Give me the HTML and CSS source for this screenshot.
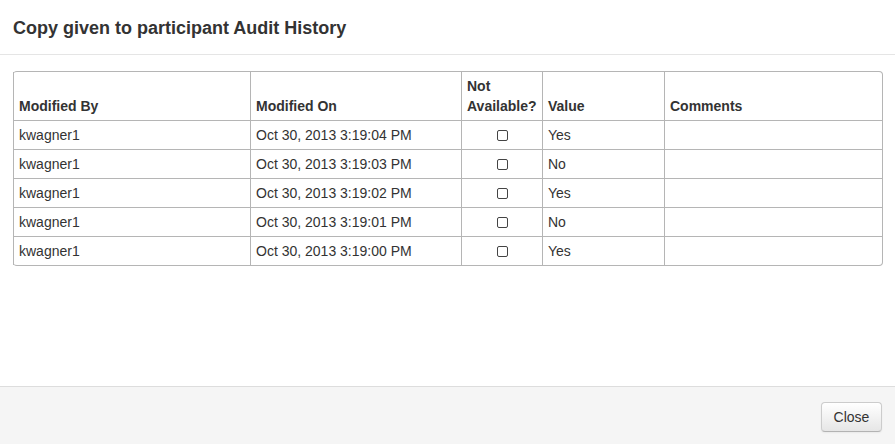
FILE: index.html
```html
<!DOCTYPE html>
<html>
<head>
<meta charset="utf-8">
<link rel="stylesheet" href="styles.css">
</head>
<body>
<div class="modal">
  <div class="modal-header">
    <h3 class="title">Copy given to participant Audit History</h3>
  </div>
  <div class="modal-body">
    <table class="audit">
      <colgroup>
        <col class="c1"><col class="c2"><col class="c3"><col class="c4"><col class="c5">
      </colgroup>
      <thead>
        <tr>
          <th>Modified By</th>
          <th>Modified On</th>
          <th>Not<br>Available?</th>
          <th>Value</th>
          <th>Comments</th>
        </tr>
      </thead>
      <tbody>
        <tr><td>kwagner1</td><td>Oct 30, 2013 3:19:04 PM</td><td class="center"><input type="checkbox" class="cb"></td><td>Yes</td><td></td></tr>
        <tr><td>kwagner1</td><td>Oct 30, 2013 3:19:03 PM</td><td class="center"><input type="checkbox" class="cb"></td><td>No</td><td></td></tr>
        <tr><td>kwagner1</td><td>Oct 30, 2013 3:19:02 PM</td><td class="center"><input type="checkbox" class="cb"></td><td>Yes</td><td></td></tr>
        <tr><td>kwagner1</td><td>Oct 30, 2013 3:19:01 PM</td><td class="center"><input type="checkbox" class="cb"></td><td>No</td><td></td></tr>
        <tr><td>kwagner1</td><td>Oct 30, 2013 3:19:00 PM</td><td class="center"><input type="checkbox" class="cb"></td><td>Yes</td><td></td></tr>
      </tbody>
    </table>
  </div>
  <div class="modal-footer">
    <button class="btn">Close</button>
  </div>
</div>
</body>
</html>
```
FILE: styles.css
```css
html, body {
  margin: 0;
  padding: 0;
  background: #fff;
}
body {
  font-family: "Liberation Sans", Arial, sans-serif;
  font-size: 14px;
  line-height: 20px;
  color: #333;
}
.modal {
  width: 895px;
  height: 444px;
  display: flex;
  flex-direction: column;
}
.modal-header {
  height: 54px;
  border-bottom: 1px solid #e5e5e5;
  padding: 0 13px;
  display: flex;
  align-items: center;
  box-sizing: content-box;
  flex: none;
}
.title {
  margin: 0;
  font-size: 18px;
  font-weight: bold;
  line-height: 24px;
  color: #333;
  position: relative;
  top: 1px;
}
.modal-body {
  flex: 1;
  padding: 16px 13px 0 13px;
}
.audit {
  width: 869px;
  table-layout: fixed;
  border-collapse: separate;
  border-spacing: 0;
  border: 1px solid #b5b5b5;
  border-left: 0;
  border-radius: 4px;
}
.c1 { width: 237px; }
.c2 { width: 211px; }
.c3 { width: 81px; }
.c4 { width: 122px; }
.c5 { width: 218px; }
.audit th, .audit td {
  padding: 4px 5px;
  text-align: left;
  vertical-align: bottom;
  border-left: 1px solid #b5b5b5;
  border-top: 1px solid #b5b5b5;
  line-height: 20px;
}
.audit th {
  border-top: 0;
  font-weight: bold;
  color: #333;
}
.audit td {
  vertical-align: top;
}
.audit .center {
  text-align: center;
}
.cb {
  appearance: none;
  -webkit-appearance: none;
  width: 11px;
  height: 11px;
  margin: 0;
  border: 1px solid #444;
  border-radius: 2px;
  background: #fff;
  box-sizing: border-box;
  vertical-align: -1px;
}
.modal-footer {
  height: 42px;
  border-top: 1px solid #ddd;
  background: #f5f5f5;
  display: flex;
  justify-content: flex-end;
  align-items: flex-start;
  padding: 15px 13px 0 13px;
  box-sizing: content-box;
  flex: none;
}
.btn {
  font-family: "Liberation Sans", Arial, sans-serif;
  font-size: 14px;
  line-height: 20px;
  color: #333;
  padding: 4px 11px;
  height: 30px;
  width: 61px;
  border: 1px solid #ccc;
  border-bottom-color: #b3b3b3;
  border-radius: 4px;
  background: linear-gradient(#ffffff, #e6e6e6);
  box-shadow: inset 0 1px 0 rgba(255,255,255,.2), 0 1px 2px rgba(0,0,0,.05);
}
```
